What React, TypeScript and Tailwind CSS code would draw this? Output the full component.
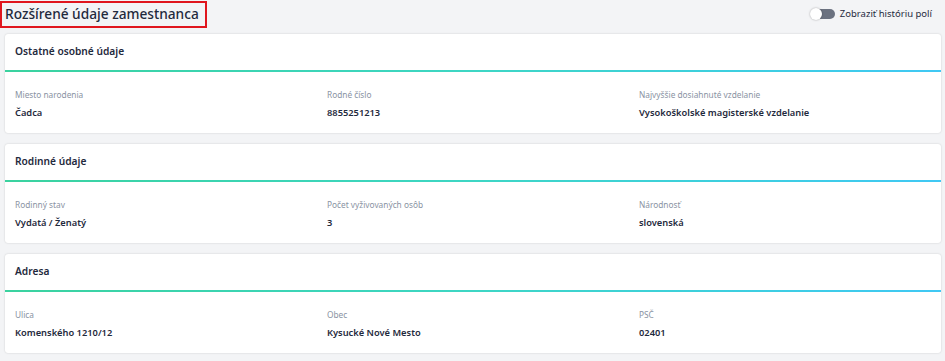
import React from 'react';

interface Field {
  label: string;
  value: string;
}

interface SectionProps {
  title: string;
  fields: Field[];
}

const Section: React.FC<SectionProps> = ({ title, fields }) => (
  <div className="bg-white rounded-[3px] shadow-[0_0_2px_rgba(0,0,0,0.18)]">
    <div className="h-[36px] flex items-center px-[10px] text-[10.2px] font-semibold text-[#1f2a3d]">
      {title}
    </div>
    <div className="h-[2px] bg-gradient-to-r from-[#3ad29f] via-[#3dd6c4] to-[#40c8f4]" />
    <div className="grid grid-cols-[312px_312px_1fr] pl-[10px] pt-[17px] pb-[13px]">
      {fields.map((f) => (
        <div key={f.label}>
          <div className="text-[8.3px] text-[#8a93a3] leading-[12px]">{f.label}</div>
          <div className="mt-[5px] text-[9.3px] font-semibold text-[#1f2a3d] leading-[14px]">{f.value}</div>
        </div>
      ))}
    </div>
  </div>
);

const App: React.FC = () => {
  return (
    <div
      className="w-[945px] h-[361px] bg-[#f3f4f6] overflow-hidden"
      style={{ fontFamily: '"Noto Sans", "Open Sans", sans-serif' }}
    >
      <div className="flex items-center justify-between h-[28px] pr-[13px]">
        <div className="h-[27px] border-2 border-[#e0161e] flex items-center pl-[3px] pr-[6px]">
          <h1 className="text-[13.7px] font-medium text-[#1f2a3d]">Rozšírené údaje zamestnanca</h1>
        </div>
        <div className="flex items-center gap-[5px]">
          <div className="relative w-[24px] h-[10px] rounded-full bg-[#6b7280]">
            <div className="absolute left-[-1px] top-[-1px] w-[12px] h-[12px] rounded-full bg-white shadow-[0_0_2px_rgba(0,0,0,0.35)]" />
          </div>
          <span className="text-[9.5px] text-[#1f2a3d]">Zobraziť históriu polí</span>
        </div>
      </div>
      <div className="flex flex-col gap-[11px] pl-[5px] pr-[4px] pt-[6px]">
        <Section
          title="Ostatné osobné údaje"
          fields={[
            { label: 'Miesto narodenia', value: 'Čadca' },
            { label: 'Rodné číslo', value: '8855251213' },
            { label: 'Najvyššie dosiahnuté vzdelanie', value: 'Vysokoškolské magisterské vzdelanie' },
          ]}
        />
        <Section
          title="Rodinné údaje"
          fields={[
            { label: 'Rodinný stav', value: 'Vydatá / Ženatý' },
            { label: 'Počet vyživovaných osôb', value: '3' },
            { label: 'Národnosť', value: 'slovenská' },
          ]}
        />
        <Section
          title="Adresa"
          fields={[
            { label: 'Ulica', value: 'Komenského 1210/12' },
            { label: 'Obec', value: 'Kysucké Nové Mesto' },
            { label: 'PSČ', value: '02401' },
          ]}
        />
      </div>
    </div>
  );
};

export default App;
